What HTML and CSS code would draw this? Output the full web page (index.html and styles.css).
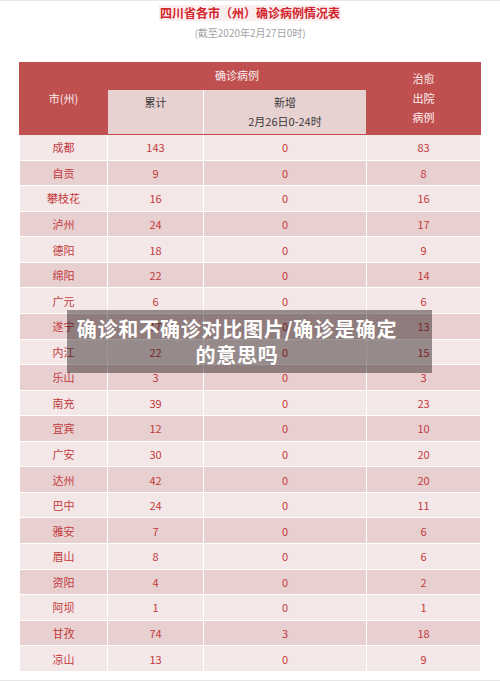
FILE: index.html
```html
<!DOCTYPE html>
<html lang="zh-CN">

<head>
    <meta charset="UTF-8">
    <meta name="viewport" content="width=device-width, initial-scale=1.0">
    <title>四川省各市（州）确诊病例情况表</title>
    <link rel="stylesheet" href="styles.css">
</head>

<body>

    <div class="page">
        <div class="heading">
            <h1 class="title">四川省各市（州）确诊病例情况表</h1>
            <p class="subtitle">(截至2020年2月27日0时)</p>
        </div>

        <table class="cases">
            <colgroup>
                <col class="col-city">
                <col class="col-total">
                <col class="col-new">
                <col class="col-cured">
            </colgroup>
            <thead>
                <tr class="head-top">
                    <th rowspan="2" class="red">市(州)</th>
                    <th colspan="2" class="red">确诊病例</th>
                    <th rowspan="2" class="red">治愈<br>出院<br>病例</th>
                </tr>
                <tr class="head-sub">
                    <th class="sub">累计<br>&nbsp;</th>
                    <th class="sub">新增<br>2月26日0-24时</th>
                </tr>
            </thead>
            <tbody>
                <tr><td>成都</td><td>143</td><td>0</td><td>83</td></tr>
                <tr><td>自贡</td><td>9</td><td>0</td><td>8</td></tr>
                <tr><td>攀枝花</td><td>16</td><td>0</td><td>16</td></tr>
                <tr><td>泸州</td><td>24</td><td>0</td><td>17</td></tr>
                <tr><td>德阳</td><td>18</td><td>0</td><td>9</td></tr>
                <tr><td>绵阳</td><td>22</td><td>0</td><td>14</td></tr>
                <tr><td>广元</td><td>6</td><td>0</td><td>6</td></tr>
                <tr><td>遂宁</td><td>17</td><td>0</td><td>13</td></tr>
                <tr><td>内江</td><td>22</td><td>0</td><td>15</td></tr>
                <tr><td>乐山</td><td>3</td><td>0</td><td>3</td></tr>
                <tr><td>南充</td><td>39</td><td>0</td><td>23</td></tr>
                <tr><td>宜宾</td><td>12</td><td>0</td><td>10</td></tr>
                <tr><td>广安</td><td>30</td><td>0</td><td>20</td></tr>
                <tr><td>达州</td><td>42</td><td>0</td><td>20</td></tr>
                <tr><td>巴中</td><td>24</td><td>0</td><td>11</td></tr>
                <tr><td>雅安</td><td>7</td><td>0</td><td>6</td></tr>
                <tr><td>眉山</td><td>8</td><td>0</td><td>6</td></tr>
                <tr><td>资阳</td><td>4</td><td>0</td><td>2</td></tr>
                <tr><td>阿坝</td><td>1</td><td>0</td><td>1</td></tr>
                <tr><td>甘孜</td><td>74</td><td>3</td><td>18</td></tr>
                <tr><td>凉山</td><td>13</td><td>0</td><td>9</td></tr>
            </tbody>
        </table>

        <!-- caption banner laid over the picture -->
        <div class="banner">确诊和不确诊对比图片/确诊是确定的意思吗</div>
    </div>

</body>

</html>
```

FILE: styles.css
```css
/* Page frame */
body {
    margin: 0;
    background: #ffffff;
    font-family: "Noto Sans CJK SC", "Noto Sans", sans-serif;
}

.page {
    position: relative;
    height: 681px;
    box-sizing: border-box;
    border-top: 1px solid #e6e6e6;
    border-bottom: 1px solid #e6e6e6;
}

/* Title block */
.heading {
    text-align: center;
    padding-top: 4px;
    height: 61px;
    box-sizing: border-box;
    font-size: 12px;
    line-height: 16px;
}

.title {
    display: inline-block;
    vertical-align: top;
    margin: 0;
    padding: 0 1px;
    font-size: 12px;
    line-height: 16px;
    font-weight: bold;
    color: #d3232b;
    background-color: #fbeeee;
}

.subtitle {
    margin: 5px 0 0;
    font-size: 10px;
    line-height: 14px;
    color: #a3a3a3;
}

/* Table */
.cases {
    width: 461px;
    margin: 0 auto;
    border-collapse: collapse;
    table-layout: fixed;
    font-size: 11px;
    text-align: center;
}

.col-city { width: 88px; }
.col-total { width: 96px; }
.col-new { width: 163px; }
.col-cured { width: 114px; }

th {
    font-weight: normal;
    padding: 0;
}

.red {
    background-color: #c0504f;
    color: #fbeeee;
    border: 1px solid #c0504f;
    line-height: 19.5px;
}

.head-top {
    height: 27px;
}

.head-sub {
    height: 45px;
}

.sub {
    background-color: #e8d1d1;
    color: #3a3a3a;
    border: 1px solid #ffffff;
    border-top-color: #c0504f;
    border-bottom-color: #c0504f;
    line-height: 19px;
    vertical-align: middle;
}

td {
    height: 24.57px;
    padding: 0;
    border: 1px solid #ffffff;
    color: #c23a3d;
    line-height: 14px;
}

tbody tr:nth-child(odd) {
    background-color: #f4e7e7;
}

tbody tr:nth-child(even) {
    background-color: #e8cfd0;
}

/* Overlay caption */
.banner {
    position: absolute;
    left: 67px;
    top: 309px;
    width: 365px;
    height: 63px;
    box-sizing: border-box;
    padding: 6px 30px 0 5px;
    background-color: rgba(20, 10, 10, 0.42);
    color: #ffffff;
    font-size: 20px;
    line-height: 26px;
    font-weight: bold;
    letter-spacing: 0.8px;
    text-align: center;
}
```
